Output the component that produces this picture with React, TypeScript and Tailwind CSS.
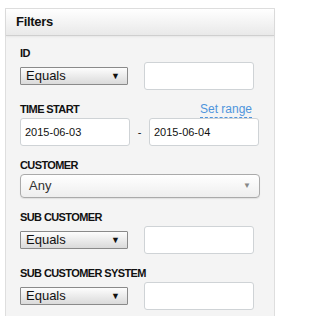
import React from "react";

const font = { fontFamily: '"Liberation Sans", Arial, Helvetica, sans-serif' };

function Label({ children }: { children: React.ReactNode }) {
  return (
    <div className="text-[11px] leading-[13px] font-bold uppercase text-[#111] tracking-[-0.6px]">
      {children}
    </div>
  );
}

function SmallSelect() {
  return (
    <div className="w-[108px] h-[18px] flex items-center justify-between pl-[5px] pr-[7px] border border-[#8a8a8a] rounded-[1px] bg-gradient-to-b from-[#fdfdfd] to-[#dadada]">
      <span className="text-[13px] leading-[16px] text-[#111]">Equals</span>
      <span className="text-[9px] leading-none text-[#111]">▼</span>
    </div>
  );
}

function TextBox({ w, value }: { w: string; value?: string }) {
  return (
    <div
      className={`${w} h-[28px] flex items-center pl-[4px] bg-white border border-[#cfd3d6] rounded-[3px] text-[11px] text-[#111]`}
    >
      {value}
    </div>
  );
}

function MatchRow() {
  return (
    <div className="mt-[2px] flex items-center gap-[16px]">
      <SmallSelect />
      <TextBox w="w-[110px]" />
    </div>
  );
}

export default function App() {
  return (
    <div className="w-[333px] h-[316px] bg-white pt-[8px] pl-[5px] overflow-hidden" style={font}>
      <div className="w-[270px] h-[330px] border border-[#dedede] bg-[#f4f4f4]">
        <div className="h-[27px] flex items-center pl-[10px] border-b border-[#cfcfcf] bg-gradient-to-b from-[#ffffff] to-[#e9e9e9] shadow-[0_1px_2px_rgba(0,0,0,0.06)]">
          <span className="text-[13px] font-bold text-[#111] tracking-[-0.3px]">Filters</span>
        </div>
        <div className="pl-[14px] pr-[15px] pt-[11px]">
          <Label>ID</Label>
          <MatchRow />

          <div className="mt-[13px] flex items-end justify-between w-[232px]">
            <Label>Time start</Label>
            <span className="text-[12px] leading-[13px] text-[#4f94dc] border-b border-dashed border-[#4f94dc] pb-[1px] -mb-[2px]">
              Set range
            </span>
          </div>
          <div className="mt-[2px] flex items-center">
            <TextBox w="w-[110px]" value="2015-06-03" />
            <div className="w-[19px] text-center text-[11px] text-[#111]">-</div>
            <TextBox w="w-[110px]" value="2015-06-04" />
          </div>

          <div className="mt-[13px]">
            <Label>Customer</Label>
          </div>
          <div className="mt-[2px] w-[240px] h-[24px] flex items-center justify-between pl-[8px] pr-[8px] border border-[#aaa] rounded-[4px] bg-gradient-to-b from-[#ffffff] to-[#eeeeee] shadow-[0_1px_1px_rgba(0,0,0,0.08)]">
            <span className="text-[13px] text-[#333]">Any</span>
            <span className="text-[8px] leading-none text-[#888]">▼</span>
          </div>

          <div className="mt-[13px]">
            <Label>Sub customer</Label>
          </div>
          <MatchRow />

          <div className="mt-[13px]">
            <Label>Sub customer system</Label>
          </div>
          <MatchRow />
        </div>
      </div>
    </div>
  );
}
